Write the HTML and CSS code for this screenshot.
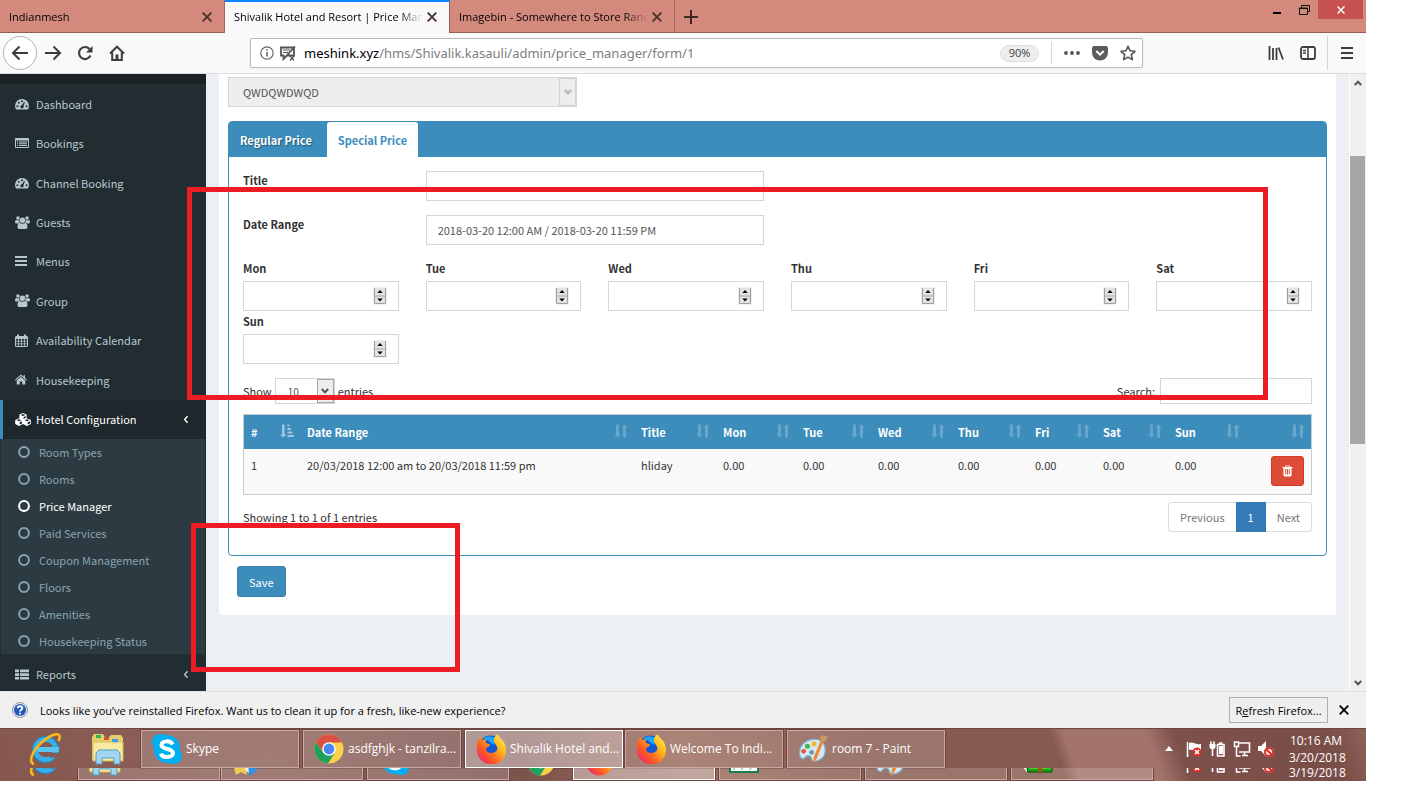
FILE: index.html
```html
<!DOCTYPE html>
<html lang="en">
<head>
<meta charset="utf-8">
<title>Shivalik Hotel and Resort | Price Manager</title>
<link rel="stylesheet" href="styles.css">
</head>
<body>
<svg class="defs" aria-hidden="true">
  <defs>
    <symbol id="dash" viewBox="0 0 14 12"><path fill="currentColor" fill-rule="evenodd" d="M7 1a7 7 0 0 0-6 10.5h12A7 7 0 0 0 7 1zM2.4 7.2a1 1 0 1 1 0 2 1 1 0 0 1 0-2zM3.8 3.8a1 1 0 1 1 0 2 1 1 0 0 1 0-2zM7 2.2a1 1 0 1 1 0 2 1 1 0 0 1 0-2zM11.6 7.2a1 1 0 1 1 0 2 1 1 0 0 1 0-2zM9 4l.9.3-1.4 4A1.6 1.6 0 1 1 7 7.2z"/></symbol>
    <symbol id="listalt" viewBox="0 0 14 12"><path fill="currentColor" fill-rule="evenodd" d="M1 1h12a1 1 0 0 1 1 1v8a1 1 0 0 1-1 1H1a1 1 0 0 1-1-1V2a1 1 0 0 1 1-1zM1 3.5V10h12V3.5zM2 4.5h1v1H2zM4 4.5h8v1H4zM2 6.300h1v1H2zM4 6.300h8v1H4zM2 8.100h1v1H2zM4 8.100h8v1H4z"/></symbol>
    <symbol id="users" viewBox="0 0 15 13"><g fill="currentColor"><circle cx="3" cy="2" r="1.8"/><circle cx="12" cy="2" r="1.8"/><circle cx="7.500" cy="4.200" r="2.700"/><path d="M0 6.300C0 4.500.7 3.800 1.500 3.900c1 .6 1.800.6 2.700.2 0 1.100.3 1.900.9 2.500-.9 0-1.600.3-2.100.8H1C.4 7.400 0 7 0 6.300zM15 6.300c0-1.800-.7-2.500-1.500-2.400-1 .6-1.800.6-2.700.2 0 1.100-.3 1.900-.9 2.500.9 0 1.600.3 2.100.8h2c.6 0 1-.4 1-1.100zM2.500 11c0-2.500.8-4 2.400-4 1.700 1 3.500 1 5.200 0 1.600 0 2.400 1.500 2.400 4 0 1.200-.6 2-1.700 2H4.200c-1.100 0-1.700-.8-1.700-2z"/></g></symbol>
    <symbol id="bars" viewBox="0 0 12 12"><path fill="currentColor" d="M0 1h12v2H0zM0 5h12v2H0zM0 9h12v2H0z"/></symbol>
    <symbol id="calendar" viewBox="0 0 13 13"><path fill="currentColor" fill-rule="evenodd" d="M1 2h1V.5h2V2h5V.5h2V2h1l1 1v9l-1 1H1l-1-1V3zM1 5v1.800h2.200V5zM4 5v1.800h2.200V5zM7 5v1.800h2.200V5zM10 5v1.800h2V5zM1 7.600v1.800h2.200V7.600zM4 7.600v1.800h2.200V7.600zM7 7.600v1.800h2.200V7.600zM10 7.600v1.800h2V7.600zM1 10.200V12h2.200v-1.800zM4 10.200V12h2.200v-1.800zM7 10.200V12h2.200v-1.800zM10 10.200V12h2v-1.800z"/></symbol>
    <symbol id="home" viewBox="0 0 12 11"><path fill="currentColor" d="M6 .5l2.500 2.200V1.200H10v2.800l2 1.700-.7.8L6 2.100.7 6.500 0 5.700zM6 3l4.300 3.600v3.900H7.200V7.400H4.800v3.100H1.700V6.600z"/></symbol>
    <symbol id="cubes" viewBox="0 0 16 13"><path fill="currentColor" fill-rule="evenodd" d="M8 0l3.600 1.500v3.800l4.200 1.800v3.900L12 13l-4-1.900L4 13 .2 11V7.100l4.200-1.800V1.500zM8 1L5.700 2 8 3l2.300-1zM8.600 4v2l2-.9V3zM4 6.300l-2.300 1L4 8.300l2.300-1zM4.600 9.400v2.200l2.400-1V8.200zM12 6.300l-2.300 1 2.300 1 2.300-1zM12.600 9.400v2.200l2.400-1V8.200z"/></symbol>
    <symbol id="thlist" viewBox="0 0 14 11"><path fill="currentColor" d="M0 .5h4v2.700H0zM5 .5h9v2.700H5zM0 4.200h4v2.700H0zM5 4.200h9v2.700H5zM0 7.900h4v2.700H0zM5 7.900h9v2.700H5z"/></symbol>
    <symbol id="ring" viewBox="0 0 12 12"><circle cx="6" cy="6" r="4.900" fill="none" stroke="currentColor" stroke-width="2"/></symbol>
    <symbol id="angle" viewBox="0 0 6 9"><path fill="none" stroke="currentColor" stroke-width="1.400" d="M4.600 1.200L1.600 4.500l3 3.300"/></symbol>
    <symbol id="sort" viewBox="0 0 14 14"><path fill="currentColor" d="M2 .5h3v10h2L3.500 13.500 0 10.500h2zM9 13.500h3V3.500h2L10.500.5 7 3.500h2z"/></symbol>
    <symbol id="sortasc" viewBox="0 0 14 14"><path fill="currentColor" d="M2 .5h2.500v10h2L3.200 13.500 0 10.500h2zM7.500.5h2v2h-2zM7.500 4h3.500v2H7.500zM7.500 7.500h5v2h-5zM7.500 11H14v2H7.500z"/></symbol>
    <symbol id="trash" viewBox="0 0 11 12"><path fill="currentColor" fill-rule="evenodd" d="M3.500.5h4l.6 1.500H10.500v1H9.600v7.500l-1 1H2.400l-1-1V3H.5V2h2.400zM4.200 1.200L3.900 2h3.200l-.3-.8zM3.200 4v5.500h1V4zM5 4v5.500h1V4zM6.800 4v5.500h1V4z"/></symbol>
    <symbol id="close" viewBox="0 0 10 10"><path fill="none" stroke="currentColor" stroke-width="1.800" d="M.7.7l8.600 8.600M9.300.7L.7 9.300"/></symbol>
    <symbol id="chev" viewBox="0 0 8 6"><path fill="none" stroke="currentColor" stroke-width="2" d="M.8 1L4 4.300 7.200 1"/></symbol>
    <symbol id="spin" viewBox="0 0 14 18"><path fill="#f0f0f0" d="M0 0h14v18H0z"/><path fill="#e3e3e3" d="M1.500 1h11v7.500h-11zM1.500 9.500h11v7h-11z"/><path fill="none" stroke="#a0a0a0" d="M1.500 1v15.500h11V1M1 9h12"/><path d="M7 3L9.700 6H4.300zM7 14.500L4.300 11.500h5.400z"/></symbol>

    <symbol id="ie" viewBox="0 0 32 32"><circle cx="16.500" cy="16.500" r="10.500" fill="none" stroke="#35b0ea" stroke-width="5.500"/><circle cx="16.500" cy="16.500" r="13" fill="none" stroke="#1586c7"/><path fill="#8a5b52" d="M18 20h13v4.500H21z"/><path fill="#55c5f3" d="M8 14h22v5H8z"/><path fill="none" stroke="#f5b91c" stroke-width="2.600" d="M5 31C-1 30 3 18 12 10S29-1 30.500 3c.5 1.500 0 3-1 5"/></symbol>
    <symbol id="folder" viewBox="0 0 34 32"><path fill="#e5ce6c" d="M1 4l2-3h9l2 3h4l2-2h10l2 3v22H1z"/><path fill="#f7eba4" stroke="#d5bb53" d="M2 9h30v19H2z"/><path fill="#2db84d" d="M5 2h5v3H5z"/><path fill="#d95039" d="M13 4h5v3h-5z"/><path fill="#3d9ee5" d="M21 6h6v3h-6z"/><path fill="#9fd5ef" stroke="#559dc7" d="M5 31V20l3-3h18l3 3v11h-6v-6H11v6z"/></symbol>
    <symbol id="skype" viewBox="0 0 30 30"><path fill="#00aff0" d="M8 0c3 0 5 1 6 1 10 0 15 7 14 16 1 1 2 3 2 5 0 5-4 8-8 8-3 0-5-1-6-1C6 29 1 22 2 13 0 11 0 9 0 8c0-5 4-8 8-8z"/><path fill="none" stroke="#fff" stroke-width="4" d="M20.500 10.500C19 6 9.500 6.500 9.500 11c0 5 11.500 3 11.500 8 0 5-11 5.500-12 .5"/></symbol>
    <symbol id="chrome" viewBox="0 0 30 30"><circle cx="15" cy="15" r="14.500" fill="#fdd04a"/><path fill="#dc4f42" d="M2 8.500A14.500 14.500 0 0 1 28 8.500H15L9 18z"/><path fill="#1fa15e" d="M2 8.500A14.500 14.500 0 0 0 14 29.500L21 18.500 9 18.300z"/><circle cx="15" cy="15" r="6.800" fill="#fff"/><circle cx="15" cy="15" r="5.400" fill="#4b87f3"/></symbol>
    <linearGradient id="foxfire" x1="1" y1="0" x2="0" y2="1"><stop offset="0" stop-color="#fff36b"/><stop offset=".35" stop-color="#ffb71a"/><stop offset=".65" stop-color="#ff5a24"/><stop offset="1" stop-color="#e31587"/></linearGradient>
    <symbol id="fox" viewBox="0 0 30 30"><circle cx="14.500" cy="13" r="11.500" fill="#1458d8"/><path fill="#17a8fb" d="M8 4q7-4 12 1l-2 6z"/><path fill="url(#foxfire)" d="M1 9c1-3 2-4 4-6 0 2 0 3 1 3 2-1 4-1 5-1-1 1-2 2-1 4 2 1 4 1 4 2-1 2-4 2-4 4 0 4 6 5 9 3 5-3 1-7-1-10-1-4 2-7 4-8 0 4 8 6 8 16a14 14 0 0 1-29 0c0-3 0-5 0-7z"/></symbol>
    <symbol id="paint" viewBox="0 0 32 30"><path fill="#d3eaf6" stroke="#7fb2d2" stroke-width="1.200" d="M14 5c9-2 15 3 15 11 0 8-6 12-12 12-4 0-1-6-6-6s-3 5-7 3c-3-2-3-8-1-12s6-7 11-8z"/><circle cx="10" cy="12" r="2.700" fill="#4db047"/><circle cx="17" cy="9.500" r="2.700" fill="#f6b72f"/><circle cx="6" cy="17.500" r="2.500" fill="#e4523d"/><circle cx="14.500" cy="18.500" r="2.500" fill="#6f93a8"/><path fill="#ef8b2f" d="M25 4l3 1-8 20-4 5 1-7z"/><path fill="#c89a60" d="M24 0l8 2-3 5-5-2z"/></symbol>
    <symbol id="star" viewBox="0 0 26 30"><path fill="#f3cf4d" d="M0 18l12 2 2 9-6-3-5 3z"/><path fill="#2f8fe0" d="M13 18h13l-3 7-6 5-3-4z"/><path fill="#e9eef2" d="M10 18h5l1 9-3-2z"/></symbol>
    <symbol id="sheet" viewBox="0 0 30 30"><path fill="#fff" stroke="#1c7b45" stroke-width="2" d="M1 2h28v24H1z"/><path fill="none" stroke="#58b077" d="M4 24l6-6M12 24l6-6M20 24l6-5"/></symbol>
    <symbol id="pencil" viewBox="0 0 32 30"><path fill="#fff" d="M0 19l6 7v-7z"/><path fill="#16a516" stroke="#064e06" d="M5 19h26v7H7z"/><path fill="#8bea4b" d="M8 21h22v1.500H8z"/><path fill="#a55518" d="M17 19h4v7h-4z"/></symbol>
    <symbol id="tflag" viewBox="0 0 18 18"><path fill="none" stroke="#fff" stroke-width="1.600" d="M2.500 2v15"/><path fill="#fff" d="M4 3c4-2 6 2 12 1v7c-5 1-8-2-12-1z"/><circle cx="12" cy="12" r="4.500" fill="#dd2c24"/><path stroke="#fff" stroke-width="1.700" d="M10 10l4 4M14 10l-4 4"/></symbol>
    <symbol id="tbatt" viewBox="0 0 18 18"><path fill="none" stroke="#fff" stroke-width="1.600" d="M8.500 4.500h6.500V16H8.500zM10 3h3.500M3.500 9v7M2 1.500v3M5 1.500v3"/><path fill="#fff" d="M.5 4h6v3.500L5 9H2L.5 7.500zM10 6h4v8h-4z"/></symbol>
    <symbol id="tnet" viewBox="0 0 18 18"><path fill="none" stroke="#fff" stroke-width="1.600" d="M6 3h10.500v9H6M9 15.500h6M11.500 12v3M3.500 7v9h4"/><path fill="none" stroke="#fff" stroke-width="1.500" d="M1.500 2h4v4.500h-4z"/></symbol>
    <symbol id="tvol" viewBox="0 0 18 18"><path fill="#fff" d="M1 6h3l5-5v15l-5-5H1z"/><circle cx="12" cy="12" r="4.900" fill="#fff"/><circle cx="12" cy="12" r="4" fill="none" stroke="#dd2c24" stroke-width="2"/><path stroke="#dd2c24" stroke-width="2" d="M9.200 9.200l5.600 5.600"/></symbol>
  </defs>
</svg>

<div class="screen">
  <header class="tabbar">
    <div class="tab"><span class="tab-text">Indianmesh</span><button class="tab-x" aria-label="Close tab"><svg width="10" height="10"><use href="#close"/></svg></button></div>
    <div class="tab tab-active"><span class="tab-text">Shivalik Hotel and Resort | Price Manager</span><button class="tab-x" aria-label="Close tab"><svg width="10" height="10"><use href="#close"/></svg></button></div>
    <div class="tab"><span class="tab-text">Imagebin - Somewhere to Store Random Things</span><button class="tab-x" aria-label="Close tab"><svg width="10" height="10"><use href="#close"/></svg></button></div>
    <button class="new-tab" aria-label="New tab"><svg width="14" height="14" viewBox="0 0 14 14"><path stroke="#3f2926" stroke-width="2" d="M7 0v14M0 7h14"/></svg></button>
    <div class="win-buttons">
      <button class="win" aria-label="Minimize"><svg width="9" height="10" viewBox="0 0 9 10"><path d="M0 7h8v2H0z"/></svg></button>
      <button class="win" aria-label="Restore"><svg width="11" height="10" viewBox="0 0 11 10"><path fill="none" stroke="#111" d="M2.500 2.500V.5h8v6h-2"/><path fill="none" stroke="#111" d="M.5 3h8v6.500h-8zM.5 3.500h8"/></svg></button>
      <button class="win win-close" aria-label="Close"><svg width="8" height="8"><use href="#close"/></svg></button>
    </div>
  </header>

  <nav class="toolbar">
    <button class="back" aria-label="Back"><svg width="18" height="16" viewBox="0 0 18 16"><path fill="none" stroke="currentColor" stroke-width="2" d="M17 8H2M8.500 1.500L2 8l6.500 6.500"/></svg></button>
    <button class="tool" aria-label="Forward"><svg width="18" height="16" viewBox="0 0 18 16"><path fill="none" stroke="currentColor" stroke-width="2" d="M1 8h15M9.500 1.500L16 8l-6.500 6.500"/></svg></button>
    <button class="tool" aria-label="Reload"><svg width="16" height="16" viewBox="0 0 16 16"><path fill="none" stroke="currentColor" stroke-width="2.200" d="M13.500 10.500a6 6 0 1 1-1-6.500"/><path fill="currentColor" d="M15.500 1v6.500H9z"/></svg></button>
    <button class="tool" aria-label="Home"><svg width="16" height="16" viewBox="0 0 16 16"><path fill="none" stroke="currentColor" stroke-width="2" d="M1 8.500L8 1.700l7 6.800M3.200 7.500V15h9.600V7.500"/><path fill="currentColor" d="M6.500 9.500h3V15h-3z"/></svg></button>
    <div class="urlbar">
      <svg width="14" height="14" viewBox="0 0 14 14"><circle cx="7" cy="7" r="6.200" fill="none" stroke="#666" stroke-width="1.200"/><path fill="#666" d="M6.200 6h1.600v4.500H6.200zM6.200 3.200h1.600v1.600H6.200z"/></svg>
      <svg width="17" height="15" viewBox="0 0 17 15"><path fill="none" stroke="#555" stroke-width="1.800" d="M2 1.500h13v8H8l-3.500 3.500V9.500H2zM16 .5L4 13.500"/><path fill="none" stroke="#555" stroke-width="1.200" d="M4 4h7M4 6.500h5M11 10l4 4.500M15 10l-4 4.500"/></svg>
      <span class="url"><span class="host">meshink.xyz</span>/hms/Shivalik.kasauli/admin/price_manager/form/1</span>
      <button class="zoom">90%</button>
      <span class="bar-line"></span>
      <svg width="16" height="4" viewBox="0 0 16 4"><g fill="#555"><circle cx="2" cy="2" r="1.900"/><circle cx="8" cy="2" r="1.900"/><circle cx="14" cy="2" r="1.900"/></g></svg>
      <svg width="16" height="15" viewBox="0 0 16 15"><path fill="#5c5c5c" d="M1.500 0h13L16 1.500V6.500a8 8 0 0 1-16 0V1.500z"/><path fill="none" stroke="#fff" stroke-width="2" d="M4.300 5L8 8.600 11.700 5"/></svg>
      <svg width="16" height="16" viewBox="0 0 16 16"><path fill="none" stroke="#555" stroke-width="1.600" stroke-linejoin="round" d="M8 1.300l2 4.500 5 .5-3.700 3.300 1 5L8 12.100l-4.300 2.500 1-5L1 6.300l5-.5z"/></svg>
    </div>
    <div class="tool-right">
      <button class="tool" aria-label="Library"><svg width="16" height="14" viewBox="0 0 16 14"><path fill="none" stroke="currentColor" stroke-width="1.800" d="M1.500 0v14M5 2v12M8.500 2v12M10.500 1.500L15 13.500"/></svg></button>
      <button class="tool" aria-label="Sidebars"><svg width="16" height="14" viewBox="0 0 16 14"><rect x="1" y="1" width="14" height="12" rx="2" fill="none" stroke="currentColor" stroke-width="1.800"/><path stroke="currentColor" stroke-width="1.500" d="M8 1v12M3 4.500h3M3 7h3"/></svg></button>
      <span class="bar-line bar-tall"></span>
      <button class="tool" aria-label="Menu"><svg width="12" height="12" viewBox="0 0 12 12"><path fill="currentColor" d="M0 0h12v2H0zM0 5h12v2H0zM0 10h12v2H0z"/></svg></button>
    </div>
  </nav>

  <div class="viewport">
    <aside class="sidebar">
      <div class="side-top"></div>
      <ul class="menu">
        <li><a href="#"><svg width="14" height="12"><use href="#dash"/></svg>Dashboard</a></li>
        <li><a href="#"><svg width="14" height="12"><use href="#listalt"/></svg>Bookings</a></li>
        <li><a href="#"><svg width="14" height="12"><use href="#dash"/></svg>Channel Booking</a></li>
        <li><a href="#"><svg width="15" height="13"><use href="#users"/></svg>Guests</a></li>
        <li><a href="#"><svg width="12" height="12"><use href="#bars"/></svg>Menus</a></li>
        <li><a href="#"><svg width="15" height="13"><use href="#users"/></svg>Group</a></li>
        <li><a href="#"><svg width="13" height="13"><use href="#calendar"/></svg>Availability Calendar</a></li>
        <li><a href="#"><svg width="12" height="11"><use href="#home"/></svg>Housekeeping</a></li>
        <li class="open"><a href="#"><svg width="16" height="13"><use href="#cubes"/></svg>Hotel Configuration<svg class="arrow" width="6" height="9"><use href="#angle"/></svg></a></li>
      </ul>
      <ul class="submenu">
        <li><a href="#"><svg width="12" height="12"><use href="#ring"/></svg>Room Types</a></li>
        <li><a href="#"><svg width="12" height="12"><use href="#ring"/></svg>Rooms</a></li>
        <li><a href="#" class="current"><svg width="12" height="12"><use href="#ring"/></svg>Price Manager</a></li>
        <li><a href="#"><svg width="12" height="12"><use href="#ring"/></svg>Paid Services</a></li>
        <li><a href="#"><svg width="12" height="12"><use href="#ring"/></svg>Coupon Management</a></li>
        <li><a href="#"><svg width="12" height="12"><use href="#ring"/></svg>Floors</a></li>
        <li><a href="#"><svg width="12" height="12"><use href="#ring"/></svg>Amenities</a></li>
        <li><a href="#"><svg width="12" height="12"><use href="#ring"/></svg>Housekeeping Status</a></li>
      </ul>
      <ul class="menu menu-last">
        <li><a href="#"><svg width="14" height="11"><use href="#thlist"/></svg>Reports<svg class="arrow" width="6" height="9"><use href="#angle"/></svg></a></li>
      </ul>
    </aside>

    <main class="content">
      <form class="box">
        <div class="room-select"><select aria-label="Room type" disabled><option>QWDQWDWQD</option></select><span class="drop"><svg width="8" height="6"><use href="#chev"/></svg></span></div>

        <section class="tabs">
          <div class="tabs-nav">
            <button type="button" class="tabs-btn">Regular Price</button>
            <button type="button" class="tabs-btn tabs-on">Special Price</button>
          </div>
          <div class="panel">
            <div class="fields">
              <label for="title">Title</label><input class="wide" id="title" type="text">
            </div>
            <div class="fields">
              <label for="range">Date Range</label><input class="wide" id="range" type="text" value="2018-03-20 12:00 AM / 2018-03-20 11:59 PM">
            </div>
            <div class="days">
              <div class="day"><label for="mon">Mon</label><div class="num"><input id="mon" type="number"><svg width="14" height="18"><use href="#spin"/></svg></div></div>
              <div class="day"><label for="tue">Tue</label><div class="num"><input id="tue" type="number"><svg width="14" height="18"><use href="#spin"/></svg></div></div>
              <div class="day"><label for="wed">Wed</label><div class="num"><input id="wed" type="number"><svg width="14" height="18"><use href="#spin"/></svg></div></div>
              <div class="day"><label for="thu">Thu</label><div class="num"><input id="thu" type="number"><svg width="14" height="18"><use href="#spin"/></svg></div></div>
              <div class="day"><label for="fri">Fri</label><div class="num"><input id="fri" type="number"><svg width="14" height="18"><use href="#spin"/></svg></div></div>
              <div class="day"><label for="sat">Sat</label><div class="num"><input id="sat" type="number"><svg width="14" height="18"><use href="#spin"/></svg></div></div>
              <div class="day"><label for="sun">Sun</label><div class="num"><input id="sun" type="number"><svg width="14" height="18"><use href="#spin"/></svg></div></div>
            </div>

            <div class="table-tools">
              <label class="length">Show <span class="len-select"><select><option>10</option></select><span class="drop drop-on"><svg width="8" height="6"><use href="#chev"/></svg></span></span> entries</label>
              <label class="search">Search:<input type="search"></label>
            </div>

            <table class="prices">
              <colgroup><col class="c-num"><col class="c-range"><col class="c-title"><col class="c-day"><col class="c-tue"><col class="c-day"><col class="c-thu"><col class="c-fri"><col class="c-sat"><col class="c-sun"><col></colgroup>
              <thead>
                <tr>
                  <th><div><span>#</span><svg class="sorted" width="14" height="14"><use href="#sortasc"/></svg></div></th>
                  <th><div><span>Date Range</span><svg width="14" height="14"><use href="#sort"/></svg></div></th>
                  <th><div><span>Title</span><svg width="14" height="14"><use href="#sort"/></svg></div></th>
                  <th><div><span>Mon</span><svg width="14" height="14"><use href="#sort"/></svg></div></th>
                  <th><div><span>Tue</span><svg width="14" height="14"><use href="#sort"/></svg></div></th>
                  <th><div><span>Wed</span><svg width="14" height="14"><use href="#sort"/></svg></div></th>
                  <th><div><span>Thu</span><svg width="14" height="14"><use href="#sort"/></svg></div></th>
                  <th><div><span>Fri</span><svg width="14" height="14"><use href="#sort"/></svg></div></th>
                  <th><div><span>Sat</span><svg width="14" height="14"><use href="#sort"/></svg></div></th>
                  <th><div><span>Sun</span><svg width="14" height="14"><use href="#sort"/></svg></div></th>
                  <th><div><span></span><svg width="14" height="14"><use href="#sort"/></svg></div></th>
                </tr>
              </thead>
              <tbody>
                <tr><td>1</td><td>20/03/2018 12:00 am to 20/03/2018 11:59 pm</td><td>hliday</td><td>0.00</td><td>0.00</td><td>0.00</td><td>0.00</td><td>0.00</td><td>0.00</td><td>0.00</td><td class="act"><button type="button" class="delete" aria-label="Delete"><svg width="11" height="12"><use href="#trash"/></svg></button></td></tr>
              </tbody>
            </table>

            <div class="table-foot">
              <span>Showing 1 to 1 of 1 entries</span>
              <div class="pages"><a href="#">Previous</a><a href="#" class="page-on">1</a><a href="#">Next</a></div>
            </div>
          </div>
        </section>
        <button type="button" class="save">Save</button>
      </form>
    </main>

    <div class="scrollbar">
      <svg width="8" height="6" class="flip"><use href="#chev"/></svg>
      <div class="track"><div class="thumb"></div></div>
      <svg width="8" height="6"><use href="#chev"/></svg>
    </div>
  </div>

  <div class="notice">
    <svg width="16" height="16" viewBox="0 0 16 16"><circle cx="8" cy="8" r="7.500" fill="#e6eaf2" stroke="#8d98ab"/><circle cx="8" cy="8" r="6" fill="#2158b8"/><path fill="none" stroke="#fff" stroke-width="1.800" d="M5.700 6.300C5.700 3.500 10.300 3.600 10.300 6.200 10.300 7.800 8 7.800 8 9.600M8 10.800v1.600"/></svg>
    <span class="notice-text">Looks like you’ve reinstalled Firefox. Want us to clean it up for a fresh, like-new experience?</span>
    <button class="refresh">R<u>e</u>fresh Firefox...</button>
    <button class="notice-x" aria-label="Dismiss"><svg width="10" height="10"><use href="#close"/></svg></button>
  </div>

  <footer class="taskbar">
    <div class="row">
      <svg class="pin" width="32" height="32"><use href="#ie"/></svg>
      <svg class="pin pin-folder" width="34" height="32"><use href="#folder"/></svg>
      <div class="tasks">
        <button class="task"><svg width="30" height="30"><use href="#skype"/></svg>Skype</button>
        <button class="task"><svg width="30" height="30"><use href="#chrome"/></svg>asdfghjk - tanzilra...</button>
        <button class="task task-on"><svg width="30" height="30"><use href="#fox"/></svg>Shivalik Hotel and...</button>
        <button class="task task-near"><svg width="30" height="30"><use href="#fox"/></svg>Welcome To Indi...</button>
        <button class="task"><svg width="30" height="30"><use href="#paint"/></svg>room 7 - Paint</button>
      </div>
      <div class="tray">
        <svg width="8" height="5" viewBox="0 0 8 5"><path fill="#fff" d="M4 0l4 5H0z"/></svg>
        <svg width="18" height="18"><use href="#tflag"/></svg>
        <svg width="18" height="18"><use href="#tbatt"/></svg>
        <svg width="18" height="18"><use href="#tnet"/></svg>
        <svg width="18" height="18"><use href="#tvol"/></svg>
        <div class="clock"><span>10:16 AM</span><span>3/20/2018</span></div>
      </div>
    </div>
    <div class="row row-under">
      <svg class="pin" width="32" height="32"><use href="#ie"/></svg>
      <div class="tasks tasks-under">
        <div class="under"><svg width="34" height="32"><use href="#folder"/></svg></div>
        <div class="under under-star"><svg width="26" height="30"><use href="#star"/></svg></div>
        <div class="under"><svg width="28" height="30"><use href="#skype"/></svg></div>
        <svg class="under-chrome" width="28" height="30"><use href="#chrome"/></svg>
        <div class="under under-on"><svg width="28" height="30"><use href="#fox"/></svg></div>
        <div class="under"><svg width="30" height="30"><use href="#sheet"/></svg></div>
        <div class="under"><svg width="32" height="30"><use href="#paint"/></svg></div>
        <div class="under"><svg width="32" height="30"><use href="#pencil"/></svg></div>
      </div>
      <div class="tray">
        <svg width="18" height="18"><use href="#tflag"/></svg>
        <svg width="18" height="18"><use href="#tbatt"/></svg>
        <svg width="18" height="18"><use href="#tnet"/></svg>
        <svg width="18" height="18"><use href="#tvol"/></svg>
        <div class="clock"><span>3/19/2018</span></div>
      </div>
    </div>
  </footer>

  <div class="mark mark-fields"></div>
  <div class="mark mark-save"></div>
</div>
</body>
</html>
```
FILE: styles.css
```css
* { box-sizing: border-box; }
html, body { margin: 0; background: #fff; }
body { font-family: "Open Sans", "Noto Sans", sans-serif; font-size: 11px; color: #000; }
button { font: inherit; color: inherit; border: 0; background: none; padding: 0; margin: 0; }
a { text-decoration: none; color: inherit; }
ul { list-style: none; margin: 0; padding: 0; }
svg { display: block; flex: none; }
.defs { position: absolute; width: 0; height: 0; }

.screen { position: relative; display: flex; flex-direction: column; height: calc(100vh - 15px); margin-right: 42px; overflow: hidden; }

/* browser tabs */
.tabbar { display: flex; flex: none; height: 33px; background: #d4897d; box-shadow: inset 0 -1px #965e56; }
.tab { display: flex; align-items: center; width: 225px; padding: 0 12px 0 9px; border-right: 1px solid #a5685f; }
.tab-text { flex: 1; overflow: hidden; white-space: nowrap; line-height: 18px; margin-right: 4px; -webkit-mask-image: linear-gradient(to left, transparent, #000 24px); mask-image: linear-gradient(to left, transparent, #000 24px); }
.tab-x { color: #4a2f2b; }
.tab-active { background: #f9f9fa; border-top: 2px solid #0a84ff; border-right-color: #965e56; padding-bottom: 2px; }
.new-tab { padding: 0 9px; }
.win-buttons { display: flex; align-items: flex-start; margin-left: auto; margin-right: 3px; }
.win { display: flex; align-items: center; justify-content: center; width: 27px; height: 19px; }
.win-close { width: 45px; color: #fff; background: #c75050; }

/* toolbar */
.toolbar { display: flex; flex: none; align-items: center; height: 41px; padding: 0 3px; background: #f9f9fa; border-bottom: 1px solid #dcdcdd; color: #3d3d3d; }
.back { display: flex; align-items: center; justify-content: center; width: 34px; height: 34px; border: 1px solid #b5b5b5; border-radius: 50%; background: #fff; }
.tool { display: flex; align-items: center; justify-content: center; width: 32px; height: 32px; }
.urlbar { display: flex; flex: 1; align-items: center; gap: 12px; height: 30px; margin-left: 117px; margin-right: 117px; padding: 0 6px 0 9px; background: #fff; border: 1px solid #b9b9b9; border-radius: 2px; box-shadow: 0 1px 3px #0000000d; }
.urlbar svg:nth-child(2) { margin-left: -7px; }
.url { flex: 1; margin-left: -4px; font: 13px/20px "Noto Sans", sans-serif; color: #7d7d7d; }
.host { color: #000; }
.zoom { width: 39px; height: 17px; border-radius: 9px; background: #ededed; border: 1px solid #dedede; line-height: 14px; }
.bar-line { width: 1px; height: 22px; background: #d7d7db; }
.bar-tall { height: 34px; margin: 0 3px; }
.tool-right { display: flex; align-items: center; }

/* page */
.viewport { display: flex; flex: 1; min-height: 0; overflow: hidden; background: #ecf0f5; font: 11px/18px "Noto Sans CJK SC", sans-serif; color: #333; }
.viewport input, .viewport select { font: inherit; color: #555; }
.sidebar { flex: none; width: 206px; background: #222d32; color: #b8c7ce; }
.side-top { height: 10px; background: #1a2226; }
.menu, .submenu { display: grid; grid-auto-rows: 1fr; }
.menu { min-height: 355px; }
.menu-last { min-height: 40px; }
.menu a { display: flex; align-items: center; height: 100%; padding: 0 17px 0 12px; border-left: 3px solid transparent; }
.menu a svg:first-child { margin-right: 5px; min-width: 16px; }
.menu a svg { overflow: visible; }
.menu a svg:first-child:not([width="16"]) { min-width: 0; }
.menu a svg[width="15"] { margin-right: 6px; }
.menu a svg[width="14"] { margin-right: 7px; }
.menu a svg[width="13"] { margin-right: 8px; }
.menu a svg[width="12"] { margin-right: 9px; }
.arrow { margin-left: auto; }
.open a { color: #fff; background: #1e282c; border-left-color: #3c8dbc; }
.submenu { min-height: 215px; margin: 0 1px; background: #2c3b41; color: #8aa4af; }
.submenu a { display: flex; align-items: center; gap: 9px; height: 100%; padding-left: 17px; }
.submenu .current { color: #fff; }

.content { flex: 1; min-width: 0; padding: 0 13px; }
.box { padding: 3px 9px 18px; background: #fff; border-radius: 0 0 3px 3px; }
.room-select, .len-select, .num { display: grid; align-items: center; }
.room-select > *, .len-select > *, .num > * { grid-area: 1 / 1; }
.room-select { width: 349px; margin-bottom: 14px; }
select { appearance: none; margin: 0; border: 1px solid #d2d6de; border-radius: 0; background: #fff; width: 100%; opacity: 1; }
.room-select select { height: 30px; padding: 0 14px; background: #eee; }
.drop { display: flex; align-items: center; justify-content: center; justify-self: end; width: 17px; height: 28px; margin-right: 1px; border: 1px solid #d2d2d2; background: #ededed; color: #b3b3b3; pointer-events: none; }
.tabs { border: 1px solid #3c8dbc; border-radius: 4px; }
.tabs-nav { display: flex; background: #3c8dbc; border-radius: 2px 2px 0 0; }
.tabs-btn { height: 35px; padding: 0 11px; font-weight: 700; color: #fff; text-shadow: 1px 1px 1px #00000066; }
.tabs-on { margin-left: 4px; background: #fff; color: #3c8dbc; text-shadow: none; border-radius: 3px 3px 0 0; }
.panel { padding: 14px 14px 23px; }
.fields, .days { display: grid; grid-template-columns: repeat(6, minmax(0, 1fr)); column-gap: 27px; }
.fields { margin-bottom: 14px; }
.panel label { font-weight: 700; }
.panel input { width: 100%; height: 30px; margin: 0; border: 1px solid #d2d6de; border-radius: 0; padding: 0 11px; outline: 0; background: #fff; }
.panel .wide { grid-column: span 2; }
.day label { display: block; margin-bottom: 4px; }
.days { row-gap: 1px; }
.num input { appearance: textfield; }
.num svg { justify-self: end; margin-right: 12px; }
.table-tools { display: flex; justify-content: space-between; align-items: flex-start; margin: 14px 0 10px; }
.panel .length, .panel .search { display: flex; align-items: center; gap: 3px; font-weight: 400; }
.len-select { width: 60px; }
.len-select select { height: 26px; padding: 2px 12px 0; font-size: 10px; }
.drop-on { height: 24px; border-color: #a5a5a5; color: #555; }
.panel .search input { width: 152px; height: 26px; margin-left: 2px; }

.prices { width: 100%; table-layout: fixed; border-collapse: separate; border-spacing: 0; border: 1px solid #c8cbce; background: #f9f9f9; }
.c-num { width: 56px; }
.c-range { width: 334px; }
.c-title { width: 82px; }
.c-day { width: 80px; }
.c-tue { width: 75px; }
.c-thu { width: 77px; }
.c-fri { width: 68px; }
.c-sat { width: 72px; }
.c-sun { width: 78px; }
.prices th { height: 34px; padding: 0 6px 0 7px; text-align: left; color: #fff; background: #3c8dbc; }
.prices th div { display: flex; align-items: center; justify-content: space-between; }
.prices th svg { opacity: .22; margin-bottom: 2px; }
.prices th .sorted { opacity: .5; }
.prices td { padding: 7px 7px 8px; vertical-align: top; white-space: nowrap; }
.prices .act { text-align: right; }
.delete { display: inline-flex; align-items: center; justify-content: center; width: 33px; height: 30px; border: 1px solid #d73925; border-radius: 3px; background: #dd4b39; color: #fff; vertical-align: top; }
.table-foot { display: flex; justify-content: space-between; margin-top: 7px; line-height: 30px; }
.pages { display: flex; color: #777; }
.pages a { padding: 0 11px; line-height: 28px; border: 1px solid #ddd; background: #fff; }
.pages a:first-child { border-radius: 4px 0 0 4px; border-right: 0; }
.pages a:last-child { border-radius: 0 4px 4px 0; border-left: 0; }
.pages .page-on { background: #337ab7; border-color: #337ab7; color: #fff; }
.save { display: block; height: 31px; margin: 10px 0 0 9px; padding: 0 11px; border: 1px solid #367fa9; border-radius: 3px; background: #3c8dbc; color: #fff; }

.scrollbar { display: flex; flex: none; flex-direction: column; align-items: center; width: 17px; padding: 6px 1px 5px 0; background: #f0f0f0; border-left: 1px solid #fff; color: #555; }
.flip { rotate: 180deg; }
.track { flex: 1; align-self: stretch; padding-top: 70px; }
.thumb { height: 55%; background: #a6a6a6; }

/* notification strip */
.notice { display: flex; flex: none; align-items: center; height: 37px; padding: 0 17px 0 12px; background: #f0f0f0; border-top: 1px solid #dfdfdf; }
.notice-text { flex: 1; margin-left: 12px; }
.refresh { width: 99px; height: 26px; border: 1px solid #adadad; background: #efefef; }
.notice-x { margin-left: 11px; }

/* taskbar */
.taskbar { flex: none; font-size: 12px; color: #fff; background: linear-gradient(70deg, #85574f 0, #8e625b 20%, #7c534d 38%, #9b6a5c 50%, #85594f 65%, #85594f 77%, #a2736b 78%, #a2736b 84%, #7d504a 86%, #7a4e48 97%, #8d625b 100%); }
.row { display: flex; align-items: center; height: 40px; border-top: 1px solid #6e4640; }
.pin { margin-left: 29px; }
.pin-folder { margin-left: 30px; }
.tasks { display: flex; gap: 4px; margin-left: 16px; }
.task { display: flex; align-items: center; gap: 4px; width: 158px; height: 38px; padding: 0 9px 0 10px; white-space: nowrap; border: 1px solid #c9a9a4; background: #ffffff2b; outline: 1px solid #6e4640; }
.task-on { border-color: #fff; background: #ffffff66; }
.task-near { margin-left: -2px; }
.tray { display: flex; align-items: center; gap: 6px; margin-left: auto; margin-right: 23px; }
.tray svg:first-child { margin-right: 6px; }
.clock { display: flex; flex-direction: column; width: 54px; margin-left: 8px; line-height: 17px; text-align: center; white-space: nowrap; }
.row-under { height: 13px; align-items: flex-end; overflow: hidden; border-top: 0; }
.row-under .pin { margin-bottom: 5px; }
.tasks-under { align-items: flex-end; margin-left: 17px; }
.under { display: flex; align-items: flex-end; width: 142px; height: 38px; padding: 0 9px 3px; border: 1px solid #c9a9a4; background: #ffffff2b; outline: 1px solid #6e4640; margin-bottom: 1px; }
.under-star { margin-left: -3px; padding-left: 11px; }
.under:nth-child(3) { padding-left: 13px; }
.under-chrome { margin: 0 14px 4px; }
.under-on { border-color: #fff; background: #ffffff66; padding-left: 11px; }
.row-under .tray { align-items: flex-end; }
.row-under .tray svg { margin-bottom: 7px; }
.row-under .tray svg:first-child { margin-right: 0; }
.row-under .clock { line-height: 13px; margin-bottom: 2px; }

/* marks drawn over the page */
.mark { position: absolute; border: 5px solid #ed1c24; pointer-events: none; }
.mark-fields { left: 187px; right: 98px; top: 187px; height: 213px; }
.mark-save { left: 191px; width: 269px; top: 523px; height: 149px; }
```
